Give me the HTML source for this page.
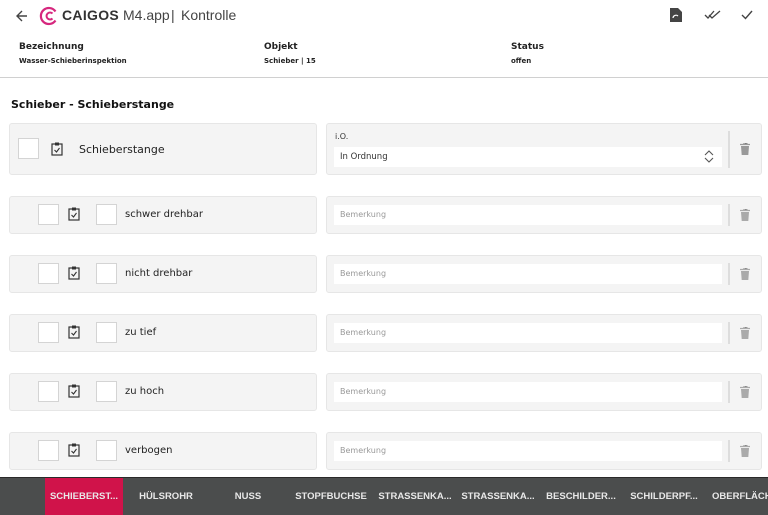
<!DOCTYPE html>
<html><head><meta charset="utf-8"><style>
*{margin:0;padding:0;box-sizing:border-box}
body{width:768px;height:515px;overflow:hidden;background:#fff;font-family:"DejaVu Sans","Liberation Sans",sans-serif;color:#222;position:relative}
.a{position:absolute}
.lbl{font-size:9px;font-weight:bold;color:#222}
.val{font-size:7px;font-weight:bold;color:#222}
.card{position:absolute;background:#f4f4f4;border:1px solid #e6e6e6;border-radius:3px}
.cb{position:absolute;width:21px;height:21px;background:#fff;border:1px solid #d4d4d4}
.txt{position:absolute;font-size:10px;color:#222}
.inp{position:absolute;background:#fff;height:20px;font-size:8px;color:#999;padding-left:6px;line-height:20px}
.sep{position:absolute;width:2px;background:#ddd}
.tab{position:absolute;top:478px;height:37px;line-height:37px;color:#e8e8e8;font-weight:bold;text-align:center;font-family:"Liberation Sans",sans-serif;font-size:9.5px}
.h{position:absolute;top:7px;font-size:14px;color:#444;font-family:"Liberation Sans",sans-serif}
</style></head><body>
<svg class="a" style="left:15px;top:9px" width="14" height="14" viewBox="0 0 14 14"><path d="M12 7H2M7 2L2 7l5 5" stroke="#444" stroke-width="1.4" fill="none"/></svg>
<svg class="a" style="left:39px;top:6px" width="20" height="20" viewBox="0 0 20 20"><path d="M16.5 5.5A8 8 0 1 0 16.5 14.5" stroke="#d6277e" stroke-width="2.2" fill="none"/><path d="M13.5 7.5A3.5 3.5 0 1 0 13.5 12.5" stroke="#d6277e" stroke-width="2" fill="none"/></svg>
<div class="a" style="left:62px;top:7px;font-size:14px;font-weight:bold;color:#333;font-family:'Liberation Sans',sans-serif;letter-spacing:0.3px">CAIGOS</div>
<div class="h" style="left:123px">M4.app</div>
<div class="h" style="left:171px">|</div>
<div class="h" style="left:181px">Kontrolle</div>
<svg class="a" style="left:670px;top:8px" width="12" height="14" viewBox="0 0 12 14"><path d="M0 0h8l4 4v10H0z" fill="#444"/><path d="M3 10a3 3 0 0 1 5-2" stroke="#fff" stroke-width="1.2" fill="none"/></svg>
<svg class="a" style="left:704px;top:10px" width="17" height="10" viewBox="0 0 17 10"><path d="M1 5l3 3 6-7M5 5l3 3 8-7" stroke="#444" stroke-width="1.3" fill="none"/></svg>
<svg class="a" style="left:741px;top:10px" width="12" height="10" viewBox="0 0 12 10"><path d="M1 5l3.5 3.5L11 1" stroke="#444" stroke-width="1.4" fill="none"/></svg>

<div class="a lbl" style="left:19px;top:42px">Bezeichnung</div>
<div class="a val" style="left:19px;top:57px">Wasser-Schieberinspektion</div>
<div class="a lbl" style="left:264px;top:42px">Objekt</div>
<div class="a val" style="left:264px;top:57px">Schieber | 15</div>
<div class="a lbl" style="left:511px;top:42px">Status</div>
<div class="a val" style="left:511px;top:57px">offen</div>
<div class="a" style="left:0;top:77px;width:768px;height:1px;background:#d0d0d0"></div>
<div class="a" style="left:11px;top:98px;font-size:11px;font-weight:bold;color:#111">Schieber - Schieberstange</div>

<div class="card" style="left:9px;top:123px;width:308px;height:52px"></div>
<div class="cb" style="left:18px;top:138px"></div>
<svg class="a" style="left:51px;top:142px" width="12" height="14" viewBox="0 0 12 14"><rect x="1" y="2" width="10" height="11" fill="none" stroke="#333" stroke-width="1.2"/><rect x="4" y="0.5" width="4" height="3" fill="#333"/><path d="M3.5 8l2 2 3-4" stroke="#333" stroke-width="1.1" fill="none"/></svg>
<div class="txt" style="left:79px;top:143px;font-size:11px">Schieberstange</div>
<div class="card" style="left:326px;top:123px;width:436px;height:52px"></div>
<div class="a" style="left:335px;top:132px;font-size:8px;color:#333">i.O.</div>
<div class="inp" style="left:334px;top:147px;width:388px;color:#333;font-size:8.5px">In Ordnung</div>
<svg class="a" style="left:704px;top:150px" width="10" height="13" viewBox="0 0 10 13"><path d="M1 5l4-4 4 4M1 8l4 4 4-4" stroke="#555" stroke-width="1.1" fill="none"/></svg>
<div class="sep" style="left:728px;top:131px;height:37px"></div>
<svg class="a" style="left:740px;top:143px" width="10" height="12" viewBox="0 0 10 12"><path d="M0 1.5h10M3 0h4v1.5" stroke="#999" stroke-width="1.2"/><path d="M1 3h8l-.7 9H1.7z" fill="#999"/></svg>

<div id="rows"></div>
<script>
var names=["schwer drehbar","nicht drehbar","zu tief","zu hoch","verbogen"],ys=[196,255,314,373,432],h="";
for(var i=0;i<5;i++){var y=ys[i];
h+='<div class="card" style="left:9px;top:'+y+'px;width:308px;height:38px"></div>'+
'<div class="cb" style="left:38px;top:'+(y+8)+'px"></div>'+
'<svg class="a" style="left:68px;top:'+(y+11)+'px" width="12" height="14" viewBox="0 0 12 14"><rect x="1" y="2" width="10" height="11" fill="none" stroke="#333" stroke-width="1.2"/><rect x="4" y="0.5" width="4" height="3" fill="#333"/><path d="M3.5 8l2 2 3-4" stroke="#333" stroke-width="1.1" fill="none"/></svg>'+
'<div class="cb" style="left:96px;top:'+(y+8)+'px"></div>'+
'<div class="txt" style="left:125px;top:'+(y+13)+'px">'+names[i]+'</div>'+
'<div class="card" style="left:326px;top:'+y+'px;width:436px;height:38px"></div>'+
'<div class="inp" style="left:334px;top:'+(y+9)+'px;width:388px">Bemerkung</div>'+
'<div class="sep" style="left:728px;top:'+(y+8)+'px;height:22px"></div>'+
'<svg class="a" style="left:740px;top:'+(y+13)+'px" width="10" height="12" viewBox="0 0 10 12"><path d="M0 1.5h10M3 0h4v1.5" stroke="#aaa" stroke-width="1.2"/><path d="M1 3h8l-.7 9H1.7z" fill="#aaa"/></svg>';}
document.getElementById("rows").innerHTML=h;
</script>

<div class="a" style="left:0;top:477px;width:768px;height:38px;background:#4b4d4d;border-top:1px solid #2a2a2a"></div>
<div class="a" style="left:45px;top:478px;width:78px;height:37px;background:#d0134a"></div>
<div class="tab" style="left:45px;width:78px">SCHIEBERST...</div>
<div class="tab" style="left:130px;width:72px">HÜLSROHR</div>
<div class="tab" style="left:215px;width:66px">NUSS</div>
<div class="tab" style="left:295px;width:72px">STOPFBUCHSE</div>
<div class="tab" style="left:376px;width:78px">STRASSENKA...</div>
<div class="tab" style="left:459px;width:78px">STRASSENKA...</div>
<div class="tab" style="left:542px;width:78px">BESCHILDER...</div>
<div class="tab" style="left:625px;width:78px">SCHILDERPF...</div>
<div class="tab" style="left:712px;width:70px;text-align:left">OBERFLÄCH</div>
</body></html>
